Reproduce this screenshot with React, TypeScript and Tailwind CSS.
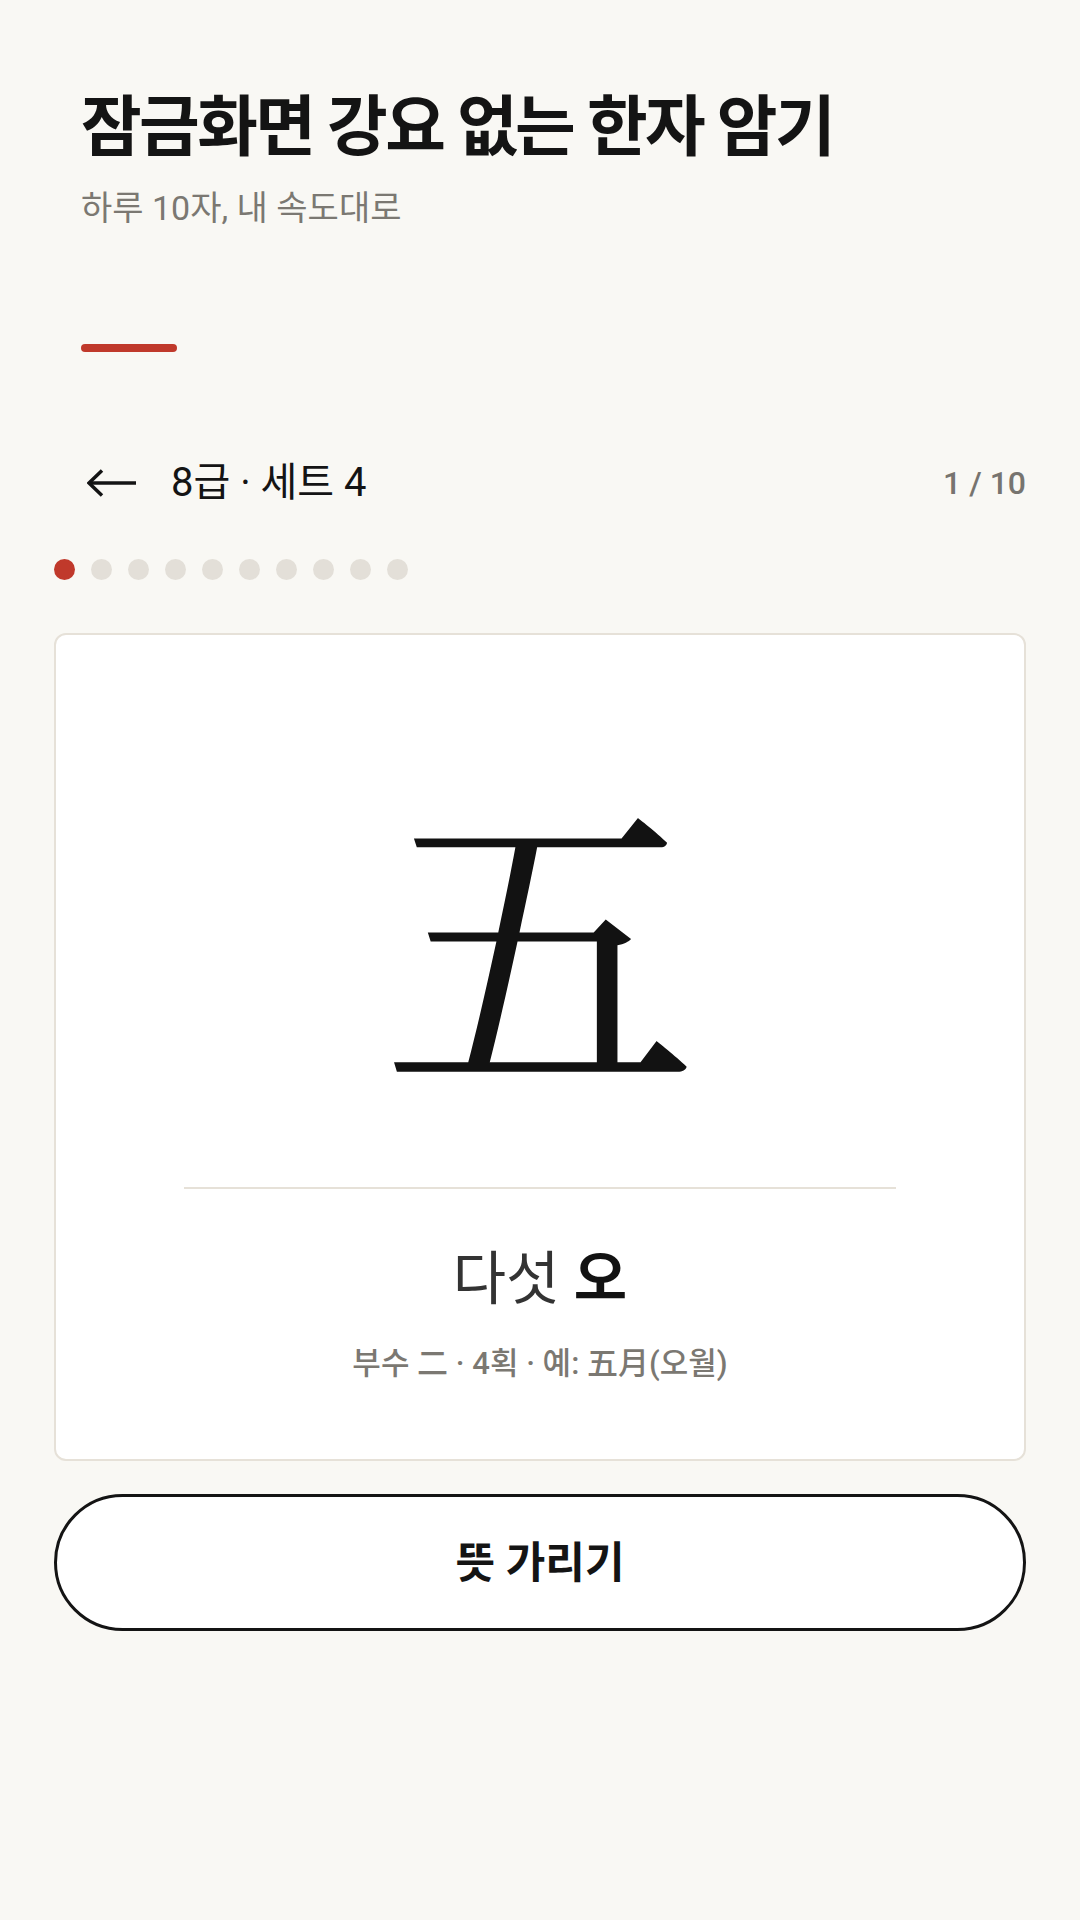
import React from 'react';

const TOTAL = 10;

const BackArrow: React.FC = () => (
  <svg width="50" height="28" viewBox="0 0 50 28" fill="none" stroke="#141414" strokeWidth={3.5}>
    <path d="M2 14H49" />
    <path d="M15 1.5L2 14L15 26.5" />
  </svg>
);

const App: React.FC = () => {
  return (
    <div className="min-h-screen w-full bg-[#f9f8f4] font-['Roboto','Noto_Sans_CJK_KR',sans-serif]">
      <div className="px-[54px]">
        {/* Header */}
        <header className="px-[27px] pt-[88px]">
          <h1 className="text-[66px] font-bold leading-[1.2] tracking-[-0.04em] text-[#141414]">
            잠금화면 강요 없는 한자 암기
          </h1>
          <p className="mt-[19px] text-[34px] leading-[1.3] text-[#7b7872]">
            하루 10자, 내 속도대로
          </p>
          <div className="mt-[114px] h-[8px] w-[96px] rounded-full bg-[#c0392b]" />
        </header>

        {/* Set nav */}
        <nav className="mt-[108px] flex h-[46px] items-center justify-between pl-[33px]">
          <div className="flex items-center gap-[34px]">
            <BackArrow />
            <span className="text-[40px] leading-[1.2] text-[#141414]">8급 · 세트 4</span>
          </div>
          <span className="text-[32px] font-medium leading-none text-[#77746f]">1 / 10</span>
        </nav>

        {/* Progress dots */}
        <div className="mt-[53px] flex gap-[16px]">
          {Array.from({ length: TOTAL }).map((_, i) => (
            <span
              key={i}
              className={i === 0 ? 'h-[21px] w-[21px] rounded-full bg-[#c0392b]' : 'h-[21px] w-[21px] rounded-full bg-[#e3dfd8]'}
            />
          ))}
        </div>

        {/* Card */}
        <div className="mt-[53px] flex h-[828px] flex-col items-center rounded-[12px] border-2 border-[#e6e1d8] bg-white pt-[137px]">
          <div className="text-[316px] leading-none text-[#121212] font-['Noto_Serif_CJK_KR','Noto_Serif_CJK_SC','Noto_Sans_CJK_KR',serif]">
            五
          </div>
          <div className="mt-[99px] h-[2px] w-[712px] bg-[#e6e1d8]" />
          <div className="mt-[56px] text-[58px] leading-[1.2] text-[#333]">
            다섯 <span className="font-bold text-[#121212]">오</span>
          </div>
          <div className="mt-[29px] text-[31px] font-medium leading-[1.3] text-[#7b7872]">
            부수 二 · 4획 · 예: 五月(오월)
          </div>
        </div>

        {/* Action */}
        <button className="mt-[33px] flex h-[137px] w-full items-center justify-center rounded-full border-[3px] border-[#141414] bg-white text-[43px] font-bold text-[#141414]">
          뜻 가리기
        </button>
      </div>
    </div>
  );
};

export default App;
